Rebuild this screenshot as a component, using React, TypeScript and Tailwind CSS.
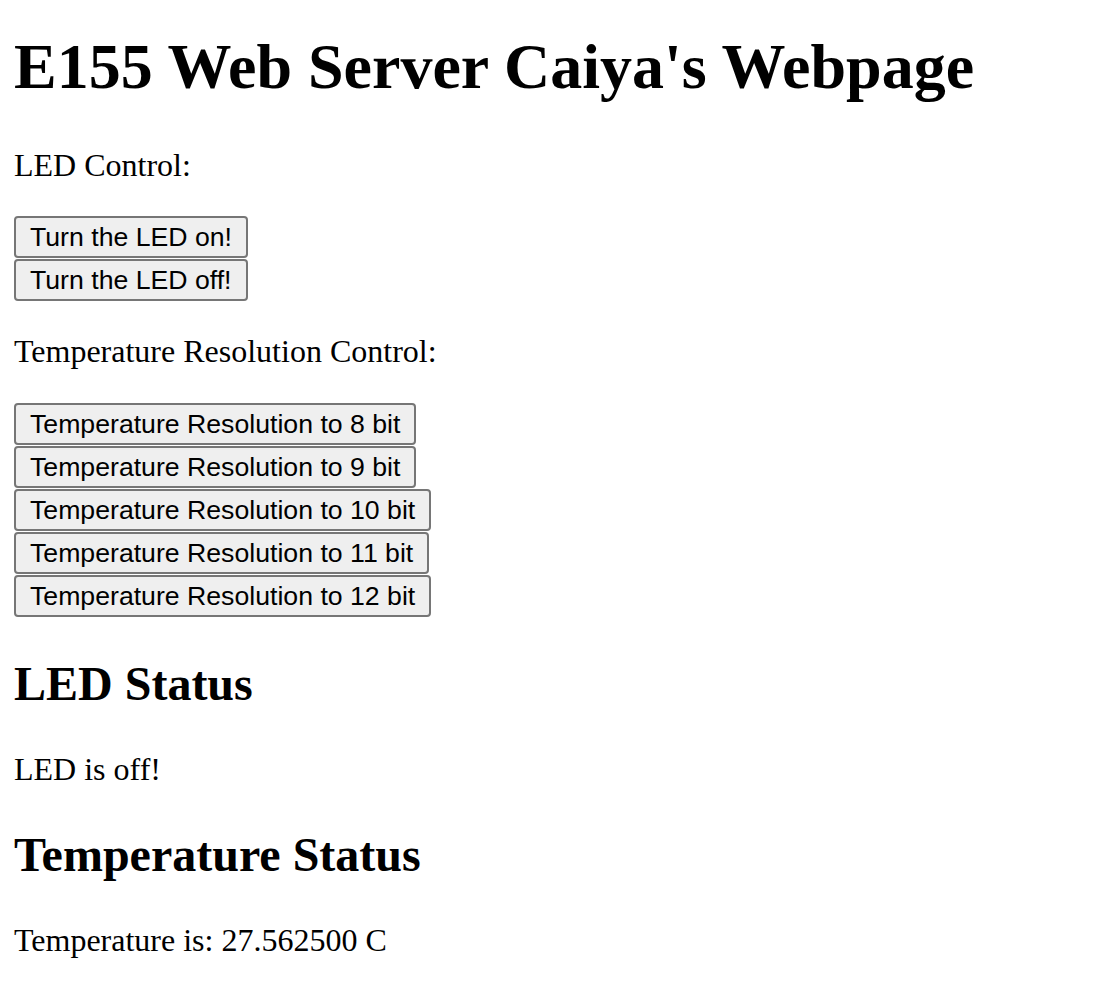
const ledButtons = ["Turn the LED on!", "Turn the LED off!"];
const resButtons = [8, 9, 10, 11, 12].map((n) => `Temperature Resolution to ${n} bit`);

function Btn({ label }: { label: string }) {
    return (
        <div className="h-[43px]">
            <button className="h-[42px] px-[14px] bg-[#efefef] border-2 border-[#767676] rounded-[4px] text-[26.67px] leading-none text-black font-['Liberation_Sans',Arial,sans-serif]">
                {label}
            </button>
        </div>
    );
}

export default function App() {
    return (
        <div className="px-[14px] pt-[31px] pb-[40px] bg-white text-black font-['Liberation_Serif','Times_New_Roman',serif]">
            <h1 className="text-[64px] leading-[71px] font-bold mb-[46px]">E155 Web Server Caiya's Webpage</h1>

            <p className="text-[32px] leading-[35px] mb-[33px]">LED Control:</p>
            {ledButtons.map((b) => <Btn key={b} label={b} />)}

            <p className="text-[32px] leading-[35px] mt-[32px] mb-[34px]">Temperature Resolution Control:</p>
            {resButtons.map((b) => <Btn key={b} label={b} />)}

            <h2 className="text-[48px] leading-[53px] font-bold mt-[39px] mb-[42px]">LED Status</h2>
            <p className="text-[32px] leading-[35px]">LED is off!</p>

            <h2 className="text-[48px] leading-[53px] font-bold mt-[41px] mb-[42px]">Temperature Status</h2>
            <p className="text-[32px] leading-[35px]">Temperature is: 27.562500 C</p>
        </div>
    );
}
